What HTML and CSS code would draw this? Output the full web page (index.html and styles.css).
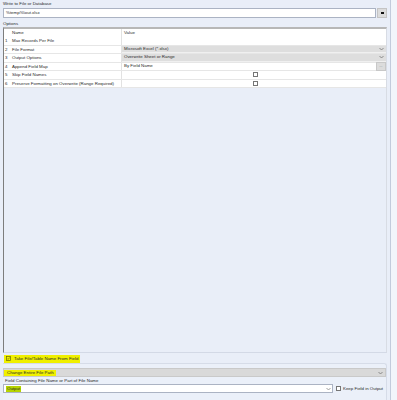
FILE: index.html
```html
<!DOCTYPE html>
<html lang="en">
<head>
    <meta charset="UTF-8">
    <title>Output Data - Configuration</title>
    <link rel="stylesheet" href="styles.css">
</head>
<body>
    <div class="page">
        <div class="main">
            <div class="label top">Write to File or Database</div>
            <div class="file-row">
                <div class="input">%temp%\out.xlsx</div>
                <div class="drop-btn"><span class="bar"></span></div>
            </div>

            <div class="label opts">Options</div>
            <div class="grid">
                <div class="row head">
                    <span class="num"></span>
                    <span class="name">Name</span>
                    <span class="value">Value</span>
                </div>
                <div class="row">
                    <span class="num">1</span>
                    <span class="name">Max Records Per File</span>
                    <span class="value"></span>
                </div>
                <div class="row">
                    <span class="num">2</span>
                    <span class="name">File Format</span>
                    <span class="value combo">Microsoft Excel (*.xlsx)
                        <svg class="chev" width="5" height="4" viewBox="0 0 5 4"><polyline points="0.5,1 2.5,3 4.5,1" fill="none" stroke="#777" stroke-width="0.8"/></svg>
                    </span>
                </div>
                <div class="row">
                    <span class="num">3</span>
                    <span class="name">Output Options</span>
                    <span class="value combo">Overwrite Sheet or Range
                        <svg class="chev" width="5" height="4" viewBox="0 0 5 4"><polyline points="0.5,1 2.5,3 4.5,1" fill="none" stroke="#777" stroke-width="0.8"/></svg>
                    </span>
                </div>
                <div class="row">
                    <span class="num">4</span>
                    <span class="name">Append Field Map</span>
                    <span class="value">By Field Name
                        <span class="dots">...</span>
                    </span>
                </div>
                <div class="row">
                    <span class="num">5</span>
                    <span class="name">Skip Field Names</span>
                    <span class="value center"><span class="check"></span></span>
                </div>
                <div class="row">
                    <span class="num">6</span>
                    <span class="name">Preserve Formatting on Overwrite (Range Required)</span>
                    <span class="value center"><span class="check"></span></span>
                </div>
            </div>

            <div class="take-row">
                <span class="hl">
                    <svg class="tick" width="5" height="5" viewBox="0 0 5 5">
                        <rect x="0.5" y="0.5" width="4" height="4" fill="#f0f000" stroke="#6a6a00" stroke-width="0.7"/>
                        <polyline points="1.3,2.6 2.1,3.4 3.7,1.5" fill="none" stroke="#5a5a00" stroke-width="0.6"/>
                    </svg>
                    Take File/Table Name From Field
                </span>
            </div>

            <div class="panel">
                <div class="select">
                    <span class="hl">Change Entire File Path</span>
                    <svg class="chev" width="5" height="4" viewBox="0 0 5 4"><polyline points="0.5,1 2.5,3 4.5,1" fill="none" stroke="#777" stroke-width="0.8"/></svg>
                </div>
                <div class="label field">Field Containing File Name or Part of File Name</div>
                <div class="field-row">
                    <div class="input combo-input">
                        <span class="sel">Output</span>
                        <svg class="chev" width="5" height="4" viewBox="0 0 5 4"><polyline points="0.5,1 2.5,3 4.5,1" fill="none" stroke="#888" stroke-width="0.8"/></svg>
                    </div>
                    <span class="check"></span>
                    <span class="keep">Keep Field in Output</span>
                </div>
            </div>
        </div>
        <div class="side"></div>
    </div>
</body>
</html>
```

FILE: styles.css
```css
body {
    margin: 0;
    font-family: "Liberation Sans", Arial, sans-serif;
    font-size: 4.4px;
    color: #2a2a2a;
    background-color: #e9eef8;
}
.page {
    display: flex;
    height: 400px;
    overflow: hidden;
}
.main {
    width: 384px;
    padding: 0 3px;
    display: flex;
    flex-direction: column;
}
.side {
    width: 6px;
    border-left: 1px solid #c3cbdc;
    background: #f2f5fb;
}
.label {
    line-height: 8px;
    height: 8px;
    flex: none;
}
.label.opts {
    line-height: 11px;
}
.file-row {
    display: flex;
    height: 10px;
    flex: none;
}
.input {
    flex: 1;
    background: white;
    border: 1px solid #abb3c3;
    line-height: 8px;
    padding-left: 2px;
}
.drop-btn {
    width: 8px;
    margin-left: 1px;
    background: #dcdcdc;
    border: 1px solid #c4c4c4;
    display: flex;
    align-items: center;
    justify-content: center;
}
.drop-btn .bar {
    width: 3px;
    height: 1.5px;
    background: #111;
}
.grid {
    flex: none;
    margin-top: 1px;
    height: 323px;
    border-top: 2px solid #b7b7b7;
    border-left: 1px solid #7d7d7d;
    border-right: 1px solid #d8dce4;
    border-bottom: 1px solid #d3d9e6;
}
.row {
    display: flex;
    height: 8.5px;
    line-height: 8px;
    background: white;
    border-bottom: 1px solid #e6e6e6;
    box-sizing: border-box;
}
.row.head {
    height: 8px;
    border-bottom: none;
    line-height: 8px;
}
.num {
    width: 6px;
    padding-left: 1px;
}
.name {
    width: 109px;
    padding-left: 1px;
    border-right: 1px solid #e2e2e2;
}
.value {
    flex: 1;
    padding-left: 2px;
    display: flex;
    align-items: center;
}
.value.combo {
    background: #dedede;
    border-bottom: 1px solid #f0f0f0;
}
.value.center {
    justify-content: center;
}
.chev {
    margin-left: auto;
    margin-right: 2px;
}
.dots {
    margin-left: auto;
    width: 8px;
    height: 7px;
    background: #dcdcdc;
    border: 1px solid #c8c8c8;
    line-height: 6px;
    text-align: center;
    color: #777;
    font-size: 3.5px;
}
.check {
    display: inline-flex;
    width: 3px;
    height: 3px;
    border: 1px solid #767676;
    background: white;
}
.take-row {
    flex: none;
    height: 9px;
    margin-top: 1px;
    display: flex;
    align-items: center;
    padding-left: 1px;
}
.hl {
    background: #f0f000;
    display: inline-flex;
    align-items: center;
    gap: 3px;
    padding: 1px 2px;
    line-height: 6px;
}
.panel {
    flex: 1;
    border-top: 1px solid #d6dce8;
    border-right: 1px solid #d6dce8;
    border-top-right-radius: 3px;
    background: #ebf0f9;
    padding-top: 4px;
}
.select {
    height: 7px;
    background: #d9d9d9;
    border: 1px solid #c9c9c9;
    display: flex;
    align-items: center;
}
.select .hl {
    padding: 0 2px 0 3px;
}
.label.field {
    height: 7px;
    line-height: 8px;
    padding-left: 2px;
}
.field-row {
    display: flex;
    align-items: center;
    height: 9px;
}
.combo-input {
    flex: none;
    width: 326px;
    height: 7px;
    display: flex;
    align-items: center;
}
.sel {
    background: #b7d400;
    line-height: 6px;
    padding: 0 1px;
}
.combo-input .chev {
    margin-right: 1px;
}
.field-row .check {
    margin-left: 3px;
}
.keep {
    margin-left: 2px;
}
```
